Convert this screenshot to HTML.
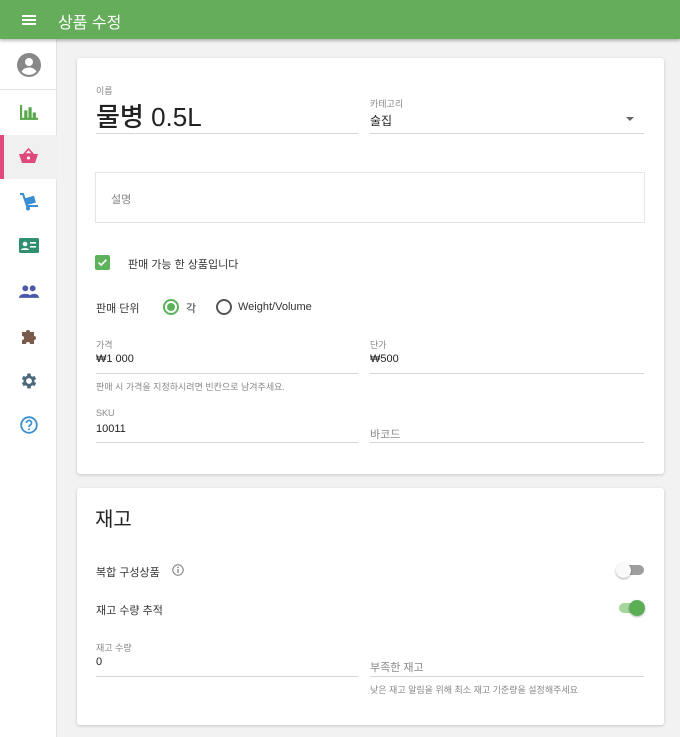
<!DOCTYPE html>
<html><head><meta charset="utf-8"><style>
*{margin:0;padding:0;box-sizing:border-box}
body{width:680px;height:737px;overflow:hidden;background:#f2f2f2;font-family:"Liberation Sans","Noto Sans CJK KR",sans-serif;color:#222;position:relative}
.a{position:absolute}
.hdr{left:0;top:0;width:680px;height:39px;background:#65ad5a;box-shadow:0 2px 3px rgba(0,0,0,.25);z-index:2}
.side{left:0;top:39px;width:57px;height:698px;background:#fff;border-right:1px solid #e2e2e2}
.card{background:#fff;border-radius:3px;box-shadow:0 1px 3px rgba(0,0,0,.18)}
.lbl{font-size:9px;color:#888}
.val{font-size:12px;color:#222}
.line{height:1px;background:#d6d6d6}
.hint{font-size:9px;color:#888}
</style></head><body>
<div class="a hdr">
 <div class="a" style="left:22px;top:15px;width:14px;height:2px;background:#fff;box-shadow:0 4px 0 #fff,0 8px 0 #fff"></div>
 <div class="a" style="left:58px;top:9px;font-size:16px;color:#fff">상품 수정</div>
</div>
<div class="a side">
 <svg class="a" style="left:17px;top:14px" width="24" height="24" viewBox="0 0 24 24"><circle cx="12" cy="12" r="12" fill="#888"/><circle cx="12" cy="9" r="4" fill="#fff"/><path d="M4.5 18.5c2-3 4.5-4 7.5-4s5.5 1 7.5 4A10 10 0 0 1 4.5 18.5z" fill="#fff"/></svg>
 <div class="a" style="left:0;top:50px;width:57px;height:1px;background:#e2e2e2"></div>
 <svg class="a" style="left:20px;top:66px" width="18" height="15" viewBox="0 0 17 14"><rect x="0" y="0" width="2" height="14" fill="#5aa84c"/><rect x="0" y="12" width="17" height="2" fill="#5aa84c"/><rect x="4" y="5" width="3" height="8" fill="#5aa84c"/><rect x="8" y="2" width="3" height="11" fill="#5aa84c"/><rect x="12" y="7" width="3" height="6" fill="#5aa84c"/></svg>
 <div class="a" style="left:0;top:96px;width:57px;height:44px;background:#f0f0f0"></div>
 <div class="a" style="left:0;top:96px;width:4px;height:44px;background:#e04a7a"></div>
 <svg class="a" style="left:19px;top:109px" width="19" height="16" viewBox="0 0 19 16"><path d="M5 6L9.5 1 14 6z" fill="none" stroke="#e04a7a" stroke-width="1.6"/><path d="M0 6h19l-3 9H3z" fill="#e04a7a"/><circle cx="9.5" cy="10" r="1.5" fill="#fff"/></svg>
 <svg class="a" style="left:19px;top:153px" width="20" height="19" viewBox="0 0 20 19"><path d="M1 2h3l4 12h11" stroke="#3b8fd1" stroke-width="2" fill="none"/><rect x="7" y="5" width="9" height="7" fill="#3b8fd1" transform="rotate(-15 11 8)"/><circle cx="9" cy="16.5" r="2" fill="#3b8fd1"/></svg>
 <svg class="a" style="left:19px;top:199px" width="20" height="15" viewBox="0 0 20 15"><rect width="20" height="15" rx="1.5" fill="#2f8f6e"/><circle cx="6" cy="6" r="2.3" fill="#fff"/><path d="M2 12c0-2.5 8-2.5 8 0z" fill="#fff"/><rect x="11" y="4" width="6" height="1.6" fill="#fff"/><rect x="11" y="8" width="6" height="1.6" fill="#fff"/></svg>
 <svg class="a" style="left:19px;top:246px" width="20" height="13" viewBox="0 0 19 12"><circle cx="6" cy="3" r="2.8" fill="#4a5aa8"/><circle cx="13" cy="3" r="2.8" fill="#4a5aa8"/><path d="M0 12c0-5 12-5 12 0zM9 12c1-5 10-5 10 0z" fill="#4a5aa8"/></svg>
 <svg class="a" style="left:20px;top:288px" width="18" height="18" viewBox="0 0 18 18"><path d="M2 5h4a2 2 0 1 1 4 0h4v4a2 2 0 1 1 0 4v4H10a2 2 0 1 0-4 0H2v-4a2 2 0 1 0 0-4z" fill="#7a5a4a"/></svg>
 <svg class="a" style="left:19px;top:332px" width="20" height="20" viewBox="0 0 24 24"><path fill="#4c6a7c" d="M19.4 13a7.5 7.5 0 0 0 0-2l2.1-1.6-2-3.5-2.5 1a7 7 0 0 0-1.7-1L15 3h-4l-.4 2.9a7 7 0 0 0-1.7 1l-2.5-1-2 3.5L6.6 11a7.5 7.5 0 0 0 0 2l-2.1 1.6 2 3.5 2.5-1a7 7 0 0 0 1.7 1L11 21h4l.4-2.9a7 7 0 0 0 1.7-1l2.5 1 2-3.5zM13 15.5a3.5 3.5 0 1 1 0-7 3.5 3.5 0 0 1 0 7z" transform="translate(-1 0)"/></svg>
 <svg class="a" style="left:20px;top:377px" width="18" height="18" viewBox="0 0 18 18"><circle cx="9" cy="9" r="7.8" fill="none" stroke="#3b8fd1" stroke-width="1.8"/><path d="M6.5 7a2.5 2.5 0 1 1 3.5 2.2c-.8.4-1 .8-1 1.8" fill="none" stroke="#3b8fd1" stroke-width="1.7"/><circle cx="9" cy="13.3" r="1" fill="#3b8fd1"/></svg>
</div>

<div class="a card" style="left:77px;top:58px;width:587px;height:416px"></div>
<div class="a lbl" style="left:96px;top:84px">이름</div>
<div class="a" style="left:96px;top:97px;font-size:26px;color:#222;font-weight:500">물병 0.5L</div>
<div class="a line" style="left:96px;top:133px;width:262px"></div>
<div class="a lbl" style="left:370px;top:97px">카테고리</div>
<div class="a val" style="left:370px;top:112px">술집</div>
<div class="a" style="left:626px;top:117px;border-left:4px solid transparent;border-right:4px solid transparent;border-top:4px solid #666"></div>
<div class="a line" style="left:370px;top:133px;width:274px"></div>
<div class="a" style="left:95px;top:172px;width:550px;height:51px;border:1px solid #e6e6e6"></div>
<div class="a" style="left:111px;top:191px;font-size:11px;color:#888">설명</div>
<div class="a" style="left:95px;top:255px;width:15px;height:15px;background:#5cb35c;border-radius:2px"></div>
<svg class="a" style="left:97px;top:257px" width="11" height="11" viewBox="0 0 10 10"><path d="M1.5 5l2.3 2.3L8.5 2.5" stroke="#fff" stroke-width="1.5" fill="none"/></svg>
<div class="a" style="left:128px;top:256px;font-size:11px;color:#333">판매 가능 한 상품입니다</div>
<div class="a" style="left:96px;top:300px;font-size:11px;color:#333">판매 단위</div>
<div class="a" style="left:163px;top:299px;width:16px;height:16px;border:2px solid #5cb35c;border-radius:50%"></div>
<div class="a" style="left:167px;top:303px;width:8px;height:8px;background:#5cb35c;border-radius:50%"></div>
<div class="a" style="left:186px;top:300px;font-size:11px;color:#333">각</div>
<div class="a" style="left:216px;top:299px;width:16px;height:16px;border:2px solid #555;border-radius:50%"></div>
<div class="a" style="left:238px;top:301px;font-size:11px;color:#333">Weight/Volume</div>
<div class="a lbl" style="left:96px;top:338px">가격</div>
<div class="a val" style="left:96px;top:353px;font-size:11px">₩1 000</div>
<div class="a line" style="left:96px;top:373px;width:262px"></div>
<div class="a lbl" style="left:370px;top:338px">단가</div>
<div class="a val" style="left:370px;top:353px;font-size:11px">₩500</div>
<div class="a line" style="left:370px;top:373px;width:274px"></div>
<div class="a hint" style="left:96px;top:380px">판매 시 가격을 지정하시려면 빈칸으로 남겨주세요.</div>
<div class="a lbl" style="left:96px;top:408px">SKU</div>
<div class="a val" style="left:96px;top:423px;font-size:11px">10011</div>
<div class="a line" style="left:96px;top:442px;width:262px"></div>
<div class="a" style="left:370px;top:426px;font-size:11px;color:#888">바코드</div>
<div class="a line" style="left:370px;top:442px;width:274px"></div>

<div class="a card" style="left:77px;top:488px;width:587px;height:237px"></div>
<div class="a" style="left:95px;top:503px;font-size:20px;color:#222">재고</div>
<div class="a" style="left:96px;top:564px;font-size:11px;color:#333">복합 구성상품</div>
<svg class="a" style="left:172px;top:564px" width="12" height="12" viewBox="0 0 12 12"><circle cx="6" cy="6" r="5.2" fill="none" stroke="#777" stroke-width="1"/><rect x="5.4" y="5" width="1.2" height="4" fill="#777"/><circle cx="6" cy="3.4" r=".8" fill="#777"/></svg>
<div class="a" style="left:619px;top:565px;width:25px;height:10px;border-radius:5px;background:#9e9e9e"></div>
<div class="a" style="left:616px;top:563px;width:15px;height:15px;border-radius:50%;background:#fafafa;box-shadow:0 1px 2px rgba(0,0,0,.35)"></div>
<div class="a" style="left:96px;top:602px;font-size:11px;color:#333">재고 수량 추적</div>
<div class="a" style="left:619px;top:603px;width:25px;height:10px;border-radius:5px;background:#a8d4a0"></div>
<div class="a" style="left:629px;top:600px;width:16px;height:16px;border-radius:50%;background:#5cae55;box-shadow:0 1px 2px rgba(0,0,0,.3)"></div>
<div class="a lbl" style="left:96px;top:641px">재고 수량</div>
<div class="a val" style="left:96px;top:656px;font-size:11px">0</div>
<div class="a line" style="left:96px;top:676px;width:262px"></div>
<div class="a" style="left:370px;top:659px;font-size:11px;color:#888">부족한 재고</div>
<div class="a line" style="left:370px;top:676px;width:274px"></div>
<div class="a hint" style="left:370px;top:683px">낮은 재고 알림을 위해 최소 재고 기준량을 설정해주세요</div>
</body></html>
